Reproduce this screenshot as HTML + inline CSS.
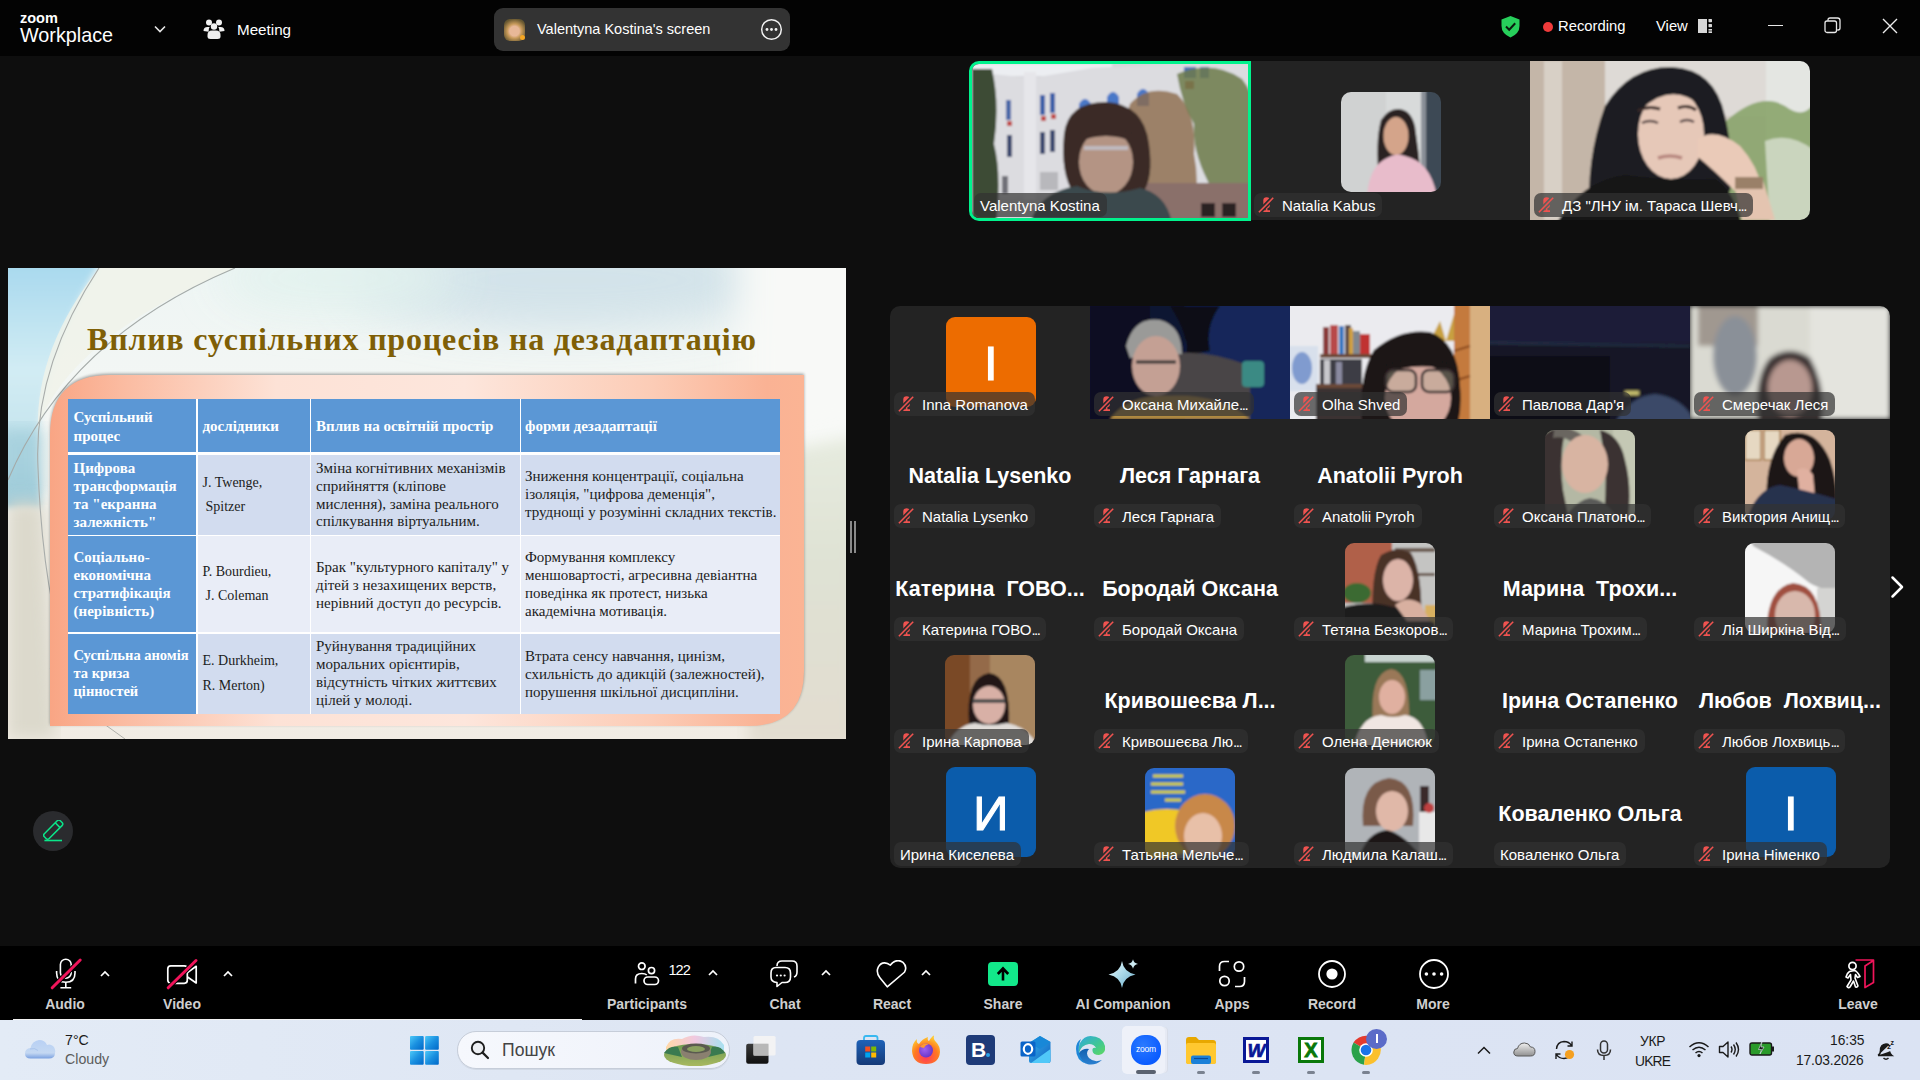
<!DOCTYPE html>
<html><head><meta charset="utf-8">
<style>
*{margin:0;padding:0;box-sizing:border-box}
html,body{width:1920px;height:1080px;overflow:hidden;background:#0e0e0e;font-family:"Liberation Sans",sans-serif;color:#fff}
.a{position:absolute}
#top{left:0;top:0;width:1920px;height:56px;background:#030303}
#main{left:0;top:56px;width:1920px;height:890px;background:#0e0e0e}
#tool{left:0;top:946px;width:1920px;height:74px;background:#000}
#task{left:0;top:1020px;width:1920px;height:60px;background:linear-gradient(90deg,#e3ebf6 0%,#dde5f3 40%,#dbe3f3 100%)}
.tile{position:absolute;background:#232323;overflow:hidden}
.lbl{position:absolute;height:24px;border-radius:7px;background:rgba(50,50,50,0.7);font-size:15px;line-height:26.5px;color:#fff;white-space:nowrap;padding:0 7px 0 28px}
.lbl.nm{padding-left:6px}
.mic{position:absolute;left:4px;top:4px;width:16px;height:16px}
.big{position:absolute;left:0;width:200px;text-align:center;font-weight:700;font-size:21.5px;color:#fff;white-space:nowrap}
.av{position:absolute;width:90px;height:90px;border-radius:9px;overflow:hidden}
.tl{position:absolute;font-size:15.2px;color:#cfcfcf;text-align:center;width:140px;font-weight:400}
.ic{position:absolute}
.sl{position:absolute;font-family:"Liberation Serif",serif;font-size:15px;line-height:18px;white-space:nowrap;color:#1c1c1c}
.sl.b{font-weight:700;color:#fff}

</style></head><body>
<div id="top" class="a"></div>
<div id="main" class="a"></div>
<div id="tool" class="a"></div>
<div class="a" style="left:13px;top:1019px;width:569px;height:1.5px;background:#f2f2f2"></div>
<div id="task" class="a"></div>
<!-- TOP BAR -->
<div class="a" style="left:20px;top:9.5px;font-size:14.5px;font-weight:700;line-height:16px;color:#fff">zoom</div>
<div class="a" style="left:20px;top:24px;font-size:19.8px;line-height:22px;color:#fff">Workplace</div>
<svg class="a" style="left:153px;top:24px" width="14" height="10" viewBox="0 0 14 10"><path d="M2 2.5 L7 7.5 L12 2.5" stroke="#e6e6e6" stroke-width="1.6" fill="none"/></svg>
<svg class="a" style="left:203px;top:18px" width="22" height="22" viewBox="0 0 22 22" fill="#f0f0f0">
<circle cx="6" cy="4.5" r="3"/><circle cx="16" cy="4.5" r="3"/><circle cx="11" cy="8.5" r="3.2"/>
<path d="M0.5 13 q0-4 4-4 h2.2 q-1 1.2-1 3.2 v1.5z"/><path d="M21.5 13 q0-4-4-4 h-2.2 q1 1.2 1 3.2 v1.5z"/>
<path d="M4.5 17 q0-4.5 4.5-4.5 h4 q4.5 0 4.5 4.5 v1.5 q0 2.5-3 2.5 h-7 q-3 0-3-2.5z"/></svg>
<div class="a" style="left:237px;top:21px;font-size:15.2px;line-height:18px;color:#fff">Meeting</div>
<div class="a" style="left:494px;top:8px;width:296px;height:43px;border-radius:9px;background:#333333"></div>
<div class="a" style="left:504px;top:19px;width:21px;height:22px;border-radius:6px;background:radial-gradient(circle at 50% 55%,#e8b898 0 30%,#c79a5a 45%,#6b5a32 75%,#4a4a30 100%)"></div>
<div class="a" style="left:520px;top:35px;width:5px;height:5px;border-radius:50%;background:#f5a623"></div>
<div class="a" style="left:537px;top:20px;font-size:14.5px;line-height:18px;color:#fff">Valentyna Kostina's screen</div>
<svg class="a" style="left:760px;top:18px" width="23" height="23" viewBox="0 0 23 23"><circle cx="11.5" cy="11.5" r="9.8" stroke="#f2f2f2" stroke-width="1.5" fill="none"/><circle cx="7" cy="11.5" r="1.4" fill="#f2f2f2"/><circle cx="11.5" cy="11.5" r="1.4" fill="#f2f2f2"/><circle cx="16" cy="11.5" r="1.4" fill="#f2f2f2"/></svg>
<svg class="a" style="left:1500px;top:15px" width="21" height="23" viewBox="0 0 21 23"><path d="M10.5 1 L19.5 4.5 V11 Q19.5 18.5 10.5 22.5 Q1.5 18.5 1.5 11 V4.5 Z" fill="#27cf5b"/><path d="M6 11.5 L9.2 14.7 L15.2 8.2" stroke="#0a1a0e" stroke-width="2" fill="none"/></svg>
<div class="a" style="left:1543px;top:22px;width:10px;height:10px;border-radius:50%;background:#ef3b3b"></div>
<div class="a" style="left:1558px;top:17px;font-size:14.8px;line-height:18px;color:#fff">Recording</div>
<div class="a" style="left:1656px;top:17px;font-size:14.8px;line-height:18px;color:#fff">View</div>
<svg class="a" style="left:1698px;top:19px" width="14" height="14" viewBox="0 0 14 14" fill="#d8d8d8"><rect x="0" y="0" width="9" height="14"/><rect x="10.5" y="0" width="3.5" height="3.2" rx="0.6"/><rect x="10.5" y="5" width="3.5" height="3.2" rx="0.6"/><rect x="10.5" y="10" width="3.5" height="1.6"/><rect x="10.5" y="12.3" width="3.5" height="1.7"/></svg>
<div class="a" style="left:1768px;top:25px;width:15px;height:1.4px;background:#e8e8e8"></div>
<svg class="a" style="left:1824px;top:17px" width="17" height="17" viewBox="0 0 17 17"><rect x="1" y="4" width="11.5" height="11.5" rx="2" stroke="#e8e8e8" stroke-width="1.3" fill="none"/><path d="M4 3.8 V3 q0-2 2-2 h7.5 q2.5 0 2.5 2.5 v7.5 q0 2-2 2 h-0.8" stroke="#e8e8e8" stroke-width="1.3" fill="none"/></svg>
<svg class="a" style="left:1882px;top:18px" width="16" height="16" viewBox="0 0 16 16"><path d="M1 1 L15 15 M15 1 L1 15" stroke="#ececec" stroke-width="1.4"/></svg>

<div class="a" style="left:8px;top:268px;width:838px;height:471px;overflow:hidden;background:#f2f2ee">
<svg class="a" style="left:0;top:0" width="838" height="471" viewBox="0 0 838 471">
<defs>
<linearGradient id="sbase" x1="0" y1="0" x2="0" y2="1"><stop offset="0" stop-color="#eef5f4"/><stop offset="0.35" stop-color="#f5f7f4"/><stop offset="0.6" stop-color="#f2f0ea"/><stop offset="1" stop-color="#f1ece4"/></linearGradient>
<radialGradient id="stop" cx="0.55" cy="0.0" r="0.45"><stop offset="0" stop-color="#c8dce4"/><stop offset="0.6" stop-color="#dae8ec" stop-opacity="0.6"/><stop offset="1" stop-color="#f4f6f4" stop-opacity="0"/></radialGradient>
<linearGradient id="scy" x1="0" y1="0" x2="1" y2="0"><stop offset="0" stop-color="#a6d8ee"/><stop offset="0.6" stop-color="#c6eaf6"/><stop offset="1" stop-color="#d8f0f6"/></linearGradient>
<linearGradient id="sal" x1="0" y1="0" x2="1" y2="0"><stop offset="0" stop-color="#f9a584"/><stop offset="0.1" stop-color="#fbbca2"/><stop offset="0.3" stop-color="#fde2d6"/><stop offset="0.55" stop-color="#fde6dc"/><stop offset="0.8" stop-color="#fcccb6"/><stop offset="0.95" stop-color="#fab294"/><stop offset="1" stop-color="#fbb494"/></linearGradient>
<linearGradient id="sgr" x1="0" y1="0" x2="0" y2="1"><stop offset="0" stop-color="#f6f6f2" stop-opacity="0"/><stop offset="0.5" stop-color="#e4e8da"/><stop offset="1" stop-color="#eee8de" stop-opacity="0"/></linearGradient>
<linearGradient id="sgr2" x1="0" y1="0" x2="0" y2="1"><stop offset="0" stop-color="#e6ebdf"/><stop offset="0.4" stop-color="#dfe2d4"/><stop offset="1" stop-color="#e2dccf"/></linearGradient>
<filter id="blur2" filterUnits="userSpaceOnUse" x="-100" y="-200" width="1100" height="500"><feGaussianBlur stdDeviation="22"/></filter>
<linearGradient id="scy2" x1="0" y1="0" x2="0" y2="1"><stop offset="0" stop-color="#a6d8ee"/><stop offset="0.45" stop-color="#d2ecf4"/><stop offset="0.8" stop-color="#c2e2ec"/><stop offset="1" stop-color="#9cc8d6"/></linearGradient>
<filter id="blur3" x="-20%" y="-20%" width="140%" height="140%"><feGaussianBlur stdDeviation="3"/></filter>
<filter id="blur4" filterUnits="userSpaceOnUse" x="500" y="-200" width="600" height="500"><feGaussianBlur stdDeviation="18"/></filter>
<filter id="blur"><feGaussianBlur stdDeviation="8"/></filter>
<filter id="sh" x="-5%" y="-5%" width="110%" height="110%"><feGaussianBlur stdDeviation="1.5"/></filter>
</defs>
<rect x="0" y="0" width="838" height="471" fill="url(#sbase)"/>
<ellipse cx="560" cy="12" rx="220" ry="50" fill="#c9dde6" opacity="0.75" filter="url(#blur2)"/><ellipse cx="330" cy="10" rx="120" ry="35" fill="#e2f2ee" opacity="0.9" filter="url(#blur2)"/>
<path d="M-10 -10 H95 Q25 100 30 200 Q31 225 33 240 H-10Z" fill="url(#scy2)" filter="url(#blur3)"/>
<rect x="-10" y="160" width="45" height="70" fill="#9ccad8" opacity="0.7" filter="url(#blur)"/>
<path d="M0 235 H36 Q40 330 48 471 H0Z" fill="#dcd9cc" filter="url(#blur)"/>
<path d="M91 0 H227 Q60 70 30 160 Q28 80 91 0Z" fill="#f0f2e8" opacity="0.8"/>
<path d="M730 -60 H900 V172 L730 192Z" fill="#f8f9f7" filter="url(#blur4)"/><path d="M740 190 L850 168 V480 H740Z" fill="url(#sgr2)" filter="url(#blur)"/>
<path d="M91 0 Q25 100 30 200 Q33 280 45 340" stroke="#a8acaa" stroke-width="1.1" fill="none"/>
<path d="M227 0 Q60 70 0 212" stroke="#a4aaa8" stroke-width="1.1" fill="none"/>
<path d="M117 471 Q70 440 42 400" stroke="#b0b0aa" stroke-width="1" fill="none"/>
<path d="M42 107 H796 V403 Q796 458 741 458 H42 V167 Q42 107 102 107 Z" fill="#000" opacity="0.35" filter="url(#sh)" transform="translate(0,-1.2)"/>
<path d="M42 107 H796 V403 Q796 458 741 458 H42 V167 Q42 107 102 107 Z" fill="url(#sal)"/>
</svg>

<div class="a" style="left:60px;top:131px;width:712px;height:315px;background:#fff"></div>
<div class="a" style="left:60px;top:131px;width:128.0px;height:53.0px;background:#5b97d5"></div>
<div class="a" style="left:189.5px;top:131px;width:112.0px;height:53.0px;background:#5b97d5"></div>
<div class="a" style="left:303px;top:131px;width:208.5px;height:53.0px;background:#5b97d5"></div>
<div class="a" style="left:513px;top:131px;width:259.0px;height:53.0px;background:#5b97d5"></div>
<div class="a" style="left:60px;top:187px;width:128.0px;height:79.5px;background:#5b97d5"></div>
<div class="a" style="left:189.5px;top:187px;width:112.0px;height:79.5px;background:#d2dcef"></div>
<div class="a" style="left:303px;top:187px;width:208.5px;height:79.5px;background:#d2dcef"></div>
<div class="a" style="left:513px;top:187px;width:259.0px;height:79.5px;background:#d2dcef"></div>
<div class="a" style="left:60px;top:268px;width:128.0px;height:96.0px;background:#5b97d5"></div>
<div class="a" style="left:189.5px;top:268px;width:112.0px;height:96.0px;background:#e9edf7"></div>
<div class="a" style="left:303px;top:268px;width:208.5px;height:96.0px;background:#e9edf7"></div>
<div class="a" style="left:513px;top:268px;width:259.0px;height:96.0px;background:#e9edf7"></div>
<div class="a" style="left:60px;top:366px;width:128.0px;height:80.0px;background:#5b97d5"></div>
<div class="a" style="left:189.5px;top:366px;width:112.0px;height:80.0px;background:#d2dcef"></div>
<div class="a" style="left:303px;top:366px;width:208.5px;height:80.0px;background:#d2dcef"></div>
<div class="a" style="left:513px;top:366px;width:259.0px;height:80.0px;background:#d2dcef"></div>
<div class="a" style="left:79px;top:53px;font-family:'Liberation Serif',serif;font-weight:700;font-size:32px;line-height:36px;letter-spacing:0.8px;color:#7f5f06;white-space:nowrap">Вплив суспільних процесів на дезадаптацію</div>
<div class="sl b" style="left:65.5px;top:140.0px;">Суспільний</div>
<div class="sl b" style="left:65.5px;top:158.5px;">процес</div>
<div class="sl b" style="left:194.5px;top:149.0px;">дослідники</div>
<div class="sl b" style="left:308.0px;top:149.0px;">Вплив на освітній простір</div>
<div class="sl b" style="left:517.0px;top:149.0px;">форми дезадаптації</div>
<div class="sl b" style="left:65.5px;top:190.7px;">Цифрова</div>
<div class="sl b" style="left:65.5px;top:208.7px;">трансформація</div>
<div class="sl b" style="left:65.5px;top:226.7px;">та "екранна</div>
<div class="sl b" style="left:65.5px;top:244.7px;">залежність"</div>
<div class="sl" style="left:194.5px;top:205.7px;font-size:14px">J. Twenge,</div>
<div class="sl" style="left:197.5px;top:230.3px;font-size:14px">Spitzer</div>
<div class="sl" style="left:308.0px;top:190.7px;">Зміна когнітивних механізмів</div>
<div class="sl" style="left:308.0px;top:208.6px;">сприйняття (кліпове</div>
<div class="sl" style="left:308.0px;top:226.5px;">мислення), заміна реального</div>
<div class="sl" style="left:308.0px;top:244.4px;">спілкування віртуальним.</div>
<div class="sl" style="left:517.0px;top:199.0px;">Зниження концентрації, соціальна</div>
<div class="sl" style="left:517.0px;top:217.0px;">ізоляція, "цифрова деменція",</div>
<div class="sl" style="left:517.0px;top:235.0px;">труднощі у розумінні складних текстів.</div>
<div class="sl b" style="left:65.5px;top:279.7px;">Соціально-</div>
<div class="sl b" style="left:65.5px;top:297.7px;">економічна</div>
<div class="sl b" style="left:65.5px;top:315.7px;">стратифікація</div>
<div class="sl b" style="left:65.5px;top:333.7px;">(нерівність)</div>
<div class="sl" style="left:194.5px;top:294.7px;font-size:14px">P. Bourdieu,</div>
<div class="sl" style="left:197.5px;top:319.0px;font-size:14px">J. Coleman</div>
<div class="sl" style="left:308.0px;top:289.5px;">Брак "культурного капіталу" у</div>
<div class="sl" style="left:308.0px;top:307.5px;">дітей з незахищених верств,</div>
<div class="sl" style="left:308.0px;top:325.5px;">нерівний доступ до ресурсів.</div>
<div class="sl" style="left:517.0px;top:279.6px;">Формування комплексу</div>
<div class="sl" style="left:517.0px;top:297.6px;">меншовартості, агресивна девіантна</div>
<div class="sl" style="left:517.0px;top:315.6px;">поведінка як протест, низька</div>
<div class="sl" style="left:517.0px;top:333.6px;">академічна мотивація.</div>
<div class="sl b" style="left:65.5px;top:378.0px;font-size:14.5px">Суспільна аномія</div>
<div class="sl b" style="left:65.5px;top:395.9px;font-size:14.5px">та криза</div>
<div class="sl b" style="left:65.5px;top:413.8px;font-size:14.5px">цінностей</div>
<div class="sl" style="left:194.5px;top:384.0px;font-size:14px">E. Durkheim,</div>
<div class="sl" style="left:194.5px;top:408.6px;font-size:14px">R. Merton)</div>
<div class="sl" style="left:308.0px;top:369.0px;">Руйнування традиційних</div>
<div class="sl" style="left:308.0px;top:387.0px;">моральних орієнтирів,</div>
<div class="sl" style="left:308.0px;top:405.0px;">відсутність чітких життєвих</div>
<div class="sl" style="left:308.0px;top:423.0px;">цілей у молоді.</div>
<div class="sl" style="left:517.0px;top:379.4px;">Втрата сенсу навчання, цинізм,</div>
<div class="sl" style="left:517.0px;top:397.3px;">схильність до адикцій (залежностей),</div>
<div class="sl" style="left:517.0px;top:415.2px;">порушення шкільної дисципліни.</div>
</div>
<div class="a" style="left:850px;top:521px;width:2px;height:32px;background:#8a8a8a"></div><div class="a" style="left:854px;top:521px;width:2px;height:32px;background:#8a8a8a"></div>
<div class="a" style="left:33px;top:811px;width:40px;height:40px;border-radius:50%;background:#2a2b2e"></div>
<svg class="a" style="left:43px;top:820px" width="22" height="24" viewBox="0 0 22 24"><g transform="translate(10.2 9.65) rotate(-45)"><rect x="-11.3" y="-3.4" width="22.6" height="6.8" rx="2.2" stroke="#0be68a" stroke-width="1.5" fill="none"/><path d="M6.3 -3.4 V3.4" stroke="#0be68a" stroke-width="1.5"/></g><path d="M1.4 20.5 H19" stroke="#0be68a" stroke-width="1.6"/></svg><svg width="0" height="0" style="position:absolute"><defs><clipPath id="micclip" clipPathUnits="userSpaceOnUse"><path d="M-1 -1 H13.45 L-1 13.65Z M17 17 V2.55 L2.74 17Z"/></clipPath></defs></svg>
<div class="a" style="left:1250px;top:61px;width:280px;height:159px;background:#232323"></div>
<div class="a" style="left:969px;top:61px;width:282px;height:160px;overflow:hidden;border-radius:10px 0 0 10px;border:3px solid #00f28c"><svg width="282" height="160" viewBox="0 0 282 160"><defs><filter id="f2" x="-10%" y="-10%" width="120%" height="120%"><feGaussianBlur stdDeviation="0.9"/></filter></defs><g filter="url(#f2)">
<rect x="-5" y="-5" width="292" height="170" fill="#d6d6da"/>
<rect x="0" y="0" width="140" height="12" fill="#eceef2"/>
<path d="M20 10 L60 14 L120 4 L200 0 L282 0 V130 L20 135Z" fill="#dcdce0"/>
<rect x="52" y="8" width="12" height="128" fill="#e6e6ea"/>
<rect x="17" y="42" width="4" height="18" fill="#4a68a8"/><rect x="34" y="36" width="5" height="20" fill="#4a68a8"/>
<rect x="68" y="31" width="5" height="20" fill="#3c5ea8"/><rect x="78" y="29" width="5" height="20" fill="#3c5ea8"/>
<rect x="69" y="52" width="5" height="5" fill="#c04848"/><rect x="79" y="50" width="5" height="5" fill="#c04848"/><rect x="35" y="57" width="5" height="5" fill="#c04848"/>
<rect x="68" y="68" width="5" height="22" fill="#3c4a70"/><rect x="78" y="66" width="5" height="22" fill="#3c4a70"/><rect x="35" y="71" width="5" height="22" fill="#3c4a70"/>
<path d="M107 52 V40 Q113 30 119 40 V52Z" fill="#4a78c8"/><path d="M135 45 V33 Q141 23 147 33 V45Z" fill="#4a78c8"/><path d="M165 42 V30 Q171 20 177 30 V42Z" fill="#4a78c8"/>
<rect x="68" y="108" width="18" height="18" fill="#b8b8bc"/><rect x="30" y="112" width="6" height="18" fill="#707078"/>
<rect x="212" y="3" width="12" height="11" fill="#4a6fb8"/><rect x="228" y="3" width="9" height="11" fill="#4a6fb8"/><rect x="213" y="17" width="9" height="8" fill="#c04848"/>
<path d="M0 5 H20 Q28 40 22 80 Q30 110 24 160 H0Z" fill="#3c4c34"/>
<path d="M158 40 Q175 20 205 30 Q225 50 222 90 Q230 130 215 160 H170 Q150 120 165 90 Q150 60 158 40Z" fill="#8c6a4a" opacity="0.8"/>
<path d="M205 10 Q240 -5 270 15 Q290 40 282 80 V150 Q260 150 240 125 Q220 90 222 60 Q210 40 205 10Z" fill="#6c7a4a" opacity="0.85"/>
<rect x="171" y="119" width="111" height="41" fill="#8a706a"/>
<rect x="229" y="139" width="14" height="14" fill="#2a2424"/><rect x="250" y="139" width="14" height="14" fill="#2a2424"/>
<path d="M92 70 Q96 38 134 38 Q172 40 177 80 Q182 115 170 130 L102 130 Q88 110 92 70Z" fill="#3a2a26"/>
<ellipse cx="134" cy="98" rx="27" ry="33" fill="#b49484"/>
<path d="M106 70 Q134 58 162 70 L162 78 Q134 66 106 78Z" fill="#3a2a26"/>
<path d="M112 84 h44" stroke="#c8d8f0" stroke-width="4" opacity="0.55"/>
<path d="M58 160 Q66 128 105 122 Q134 134 168 124 Q195 130 200 160Z" fill="#3a4a4e"/>
</g></svg></div>
<div class="lbl nm" style="left:974px;top:193px">Valentyna Kostina</div>
<div class="a" style="left:1341px;top:92px;width:100px;height:100px;overflow:hidden;border-radius:10px;"><svg width="100" height="100" viewBox="0 0 100 100"><defs><filter id="f4" x="-10%" y="-10%" width="120%" height="120%"><feGaussianBlur stdDeviation="0.8"/></filter></defs><g filter="url(#f4)">
<rect x="-5" y="-5" width="110" height="110" fill="#d8dada"/>
<rect x="-5" y="-5" width="50" height="110" fill="#d0d2d2"/>
<rect x="84" y="-5" width="20" height="110" fill="#3e4854"/>
<rect x="80" y="-5" width="5" height="110" fill="#8a9098"/>
<path d="M38 88 Q34 50 40 28 Q48 16 58 17 Q70 18 74 34 Q78 60 80 86Z" fill="#2a2020"/>
<ellipse cx="55" cy="44" rx="12.5" ry="19" fill="#d4a48a"/>
<path d="M26 105 Q28 74 46 66 Q55 60 64 64 Q90 70 96 105Z" fill="#e8bccb"/>
</g></svg></div>
<div class="lbl" style="left:1254px;top:193px"><svg class="mic" viewBox="0 0 16 16"><g clip-path="url(#micclip)"><rect x="5.3" y="0.3" width="6.6" height="11" rx="3.3" fill="#ef5350"/><path d="M8.6 11 v2.6 M5.2 14.2 h6.8" stroke="#ef5350" stroke-width="1.7"/></g><path d="M0.9 15.3 L15.2 0.8" stroke="#ef5350" stroke-width="1.6"/></svg>Natalia Kabus</div>
<div class="a" style="left:1530px;top:61px;width:280px;height:159px;overflow:hidden;border-radius:0 10px 10px 0;"><svg width="280" height="159" viewBox="0 0 280 159"><defs><filter id="f6" x="-10%" y="-10%" width="120%" height="120%"><feGaussianBlur stdDeviation="1.3"/></filter></defs><g filter="url(#f6)">
<rect x="-5" y="-5" width="290" height="170" fill="#d4ccc4"/>
<rect x="-5" y="-5" width="80" height="170" fill="#c4b6a8"/>
<rect x="14" y="0" width="18" height="159" fill="#d8d0c6"/>
<rect x="75" y="-5" width="210" height="60" fill="#dedad6"/>
<rect x="236" y="-5" width="50" height="170" fill="#e4e6e2"/>
<path d="M196 60 Q230 30 255 45 Q275 60 285 40 V165 H205 Q190 110 196 60Z" fill="#8aa46c" opacity="0.9"/>
<path d="M235 80 Q260 70 285 90 V165 H240Z" fill="#d8e0d0" opacity="0.8"/>
<path d="M60 159 Q55 100 75 45 Q100 5 142 6 Q185 8 195 55 Q205 100 200 130 L150 159Z" fill="#1e1e22"/>
<ellipse cx="141" cy="73" rx="33" ry="45" fill="#e6c8b8"/><path d="M108 50 Q118 44 130 48 M148 47 Q158 43 166 49" stroke="#3a2a28" stroke-width="3" fill="none"/><path d="M112 62 Q120 58 128 62 M150 61 Q157 57 164 61" stroke="#5a4a48" stroke-width="2.5" fill="none"/><path d="M128 97 Q140 93 152 97" stroke="#b88880" stroke-width="3.5" fill="none"/>
<path d="M112 48 Q141 20 172 45 L172 30 Q141 10 110 30Z" fill="#1e1e22"/>
<path d="M168 78 Q185 66 210 85 Q228 105 232 128 L205 130 Q185 110 168 96Z" fill="#eacab8"/>
<path d="M205 128 L232 116 L245 159 H212Z" fill="#e4c4b0"/>
<rect x="205" y="116" width="28" height="12" fill="#9a8068"/>
<path d="M25 165 Q50 120 95 114 Q140 120 185 118 Q205 130 212 165Z" fill="#141416"/>
</g></svg></div>
<div class="lbl" style="left:1534px;top:193px"><svg class="mic" viewBox="0 0 16 16"><g clip-path="url(#micclip)"><rect x="5.3" y="0.3" width="6.6" height="11" rx="3.3" fill="#ef5350"/><path d="M8.6 11 v2.6 M5.2 14.2 h6.8" stroke="#ef5350" stroke-width="1.7"/></g><path d="M0.9 15.3 L15.2 0.8" stroke="#ef5350" stroke-width="1.6"/></svg>ДЗ "ЛНУ ім. Тараса Шевч<span style="letter-spacing:-1.5px">...</span></div>
<div class="a" style="left:890px;top:306px;width:1000px;height:562px;background:#232323;border-radius:10px"></div>
<div class="a" style="left:1090px;top:306px;width:200px;height:113px;overflow:hidden;border-radius:0;"><svg width="200" height="113" viewBox="0 0 200 113"><defs><filter id="f9" x="-10%" y="-10%" width="120%" height="120%"><feGaussianBlur stdDeviation="1.2"/></filter></defs><g filter="url(#f9)">
<rect x="-5" y="-5" width="210" height="123" fill="#0e1630"/><rect x="95" y="-5" width="110" height="123" fill="#12285a"/><path d="M80 0 Q100 30 95 50 L120 45 Q115 20 130 0Z" fill="#0a0e18"/>
<rect x="0" y="0" width="60" height="113" fill="#0c1020"/>
<path d="M70 50 Q110 40 160 60 V113 H70Z" fill="#4a4446"/>
<rect x="152" y="55" width="22" height="26" rx="4" fill="#3a8a84"/>
<path d="M36 40 Q44 10 70 14 Q92 20 92 48 L40 52Z" fill="#9a9a98"/>
<ellipse cx="66" cy="60" rx="24" ry="30" fill="#c4a094"/>
<path d="M46 56 h40" stroke="#303030" stroke-width="3"/>
<path d="M20 113 Q40 88 80 90 Q130 88 160 113Z" fill="#b08a40"/>
</g></svg></div>
<div class="lbl" style="left:1094px;top:392px"><svg class="mic" viewBox="0 0 16 16"><g clip-path="url(#micclip)"><rect x="5.3" y="0.3" width="6.6" height="11" rx="3.3" fill="#ef5350"/><path d="M8.6 11 v2.6 M5.2 14.2 h6.8" stroke="#ef5350" stroke-width="1.7"/></g><path d="M0.9 15.3 L15.2 0.8" stroke="#ef5350" stroke-width="1.6"/></svg>Оксана Михайле<span style="letter-spacing:-1.5px">...</span></div>
<div class="a" style="left:1290px;top:306px;width:200px;height:113px;overflow:hidden;border-radius:0;"><svg width="200" height="113" viewBox="0 0 200 113"><defs><filter id="f11" x="-10%" y="-10%" width="120%" height="120%"><feGaussianBlur stdDeviation="1.0"/></filter></defs><g filter="url(#f11)">
<rect x="-5" y="-5" width="210" height="123" fill="#ebebef"/>
<rect x="-5" y="40" width="33" height="45" fill="#d8e0ec"/><ellipse cx="12" cy="62" rx="10" ry="16" fill="#6a8ac8" opacity="0.8"/>
<rect x="26" y="82" width="60" height="35" fill="#3a3032"/>
<rect x="30" y="48" width="54" height="4" fill="#6a4a38"/><rect x="26" y="78" width="50" height="4" fill="#6a4a38"/>
<rect x="33" y="21" width="6" height="27" fill="#8a3a3a"/><rect x="40" y="19" width="8" height="29" fill="#b84848"/><rect x="49" y="20" width="5" height="28" fill="#3a78c0"/><rect x="55" y="19" width="6" height="29" fill="#5a4a48"/><rect x="59" y="22" width="4" height="26" fill="#d0a040"/><rect x="63" y="25" width="7" height="23" fill="#808890"/><rect x="70" y="28" width="10" height="20" fill="#c03030"/>
<rect x="30" y="53" width="42" height="25" fill="#3e3c44"/><rect x="34" y="54" width="6" height="24" fill="#c8c8cc"/><rect x="46" y="56" width="6" height="22" fill="#8a8aa0"/>
<path d="M140 35 L150 15 L156 35 L165 5 L172 35Z" fill="#c8a040"/>
<rect x="164" y="-5" width="41" height="123" fill="#c47a3c"/><rect x="180" y="-5" width="25" height="123" fill="#d8b080"/><path d="M164 45 L180 40 M164 75 L180 70" stroke="#8a4a20" stroke-width="2"/>
<path d="M72 117 Q68 70 84 44 Q110 22 140 26 Q168 36 170 80 Q172 100 168 117Z" fill="#1a1416"/>
<ellipse cx="128" cy="92" rx="33" ry="35" fill="#d4a89e"/>
<path d="M94 60 Q128 46 166 60 L166 66 Q128 54 94 68Z" fill="#1a1416"/>
<rect x="96" y="64" width="30" height="22" rx="7" stroke="#3a3030" stroke-width="2.5" fill="#b8b098" fill-opacity="0.4"/><rect x="132" y="64" width="32" height="22" rx="7" stroke="#3a3030" stroke-width="2.5" fill="#b8b098" fill-opacity="0.4"/>
</g></svg></div>
<div class="lbl" style="left:1294px;top:392px"><svg class="mic" viewBox="0 0 16 16"><g clip-path="url(#micclip)"><rect x="5.3" y="0.3" width="6.6" height="11" rx="3.3" fill="#ef5350"/><path d="M8.6 11 v2.6 M5.2 14.2 h6.8" stroke="#ef5350" stroke-width="1.7"/></g><path d="M0.9 15.3 L15.2 0.8" stroke="#ef5350" stroke-width="1.6"/></svg>Olha Shved</div>
<div class="a" style="left:1490px;top:306px;width:200px;height:113px;overflow:hidden;border-radius:0;"><svg width="200" height="113" viewBox="0 0 200 113"><defs><filter id="f13" x="-10%" y="-10%" width="120%" height="120%"><feGaussianBlur stdDeviation="1.5"/></filter></defs><g filter="url(#f13)">
<rect x="-5" y="-5" width="210" height="123" fill="#121628"/>
<rect x="-5" y="-5" width="210" height="42" fill="#1a1f38"/>
<path d="M-5 37 L200 40" stroke="#2a3a50" stroke-width="1.5"/>
<rect x="-5" y="50" width="125" height="70" fill="#0a0c16"/>
<rect x="135" y="85" width="14" height="4" fill="#c8c070"/>
<path d="M125 117 Q140 90 165 88 Q195 92 205 117Z" fill="#3a4868"/>
</g></svg></div>
<div class="lbl" style="left:1494px;top:392px"><svg class="mic" viewBox="0 0 16 16"><g clip-path="url(#micclip)"><rect x="5.3" y="0.3" width="6.6" height="11" rx="3.3" fill="#ef5350"/><path d="M8.6 11 v2.6 M5.2 14.2 h6.8" stroke="#ef5350" stroke-width="1.7"/></g><path d="M0.9 15.3 L15.2 0.8" stroke="#ef5350" stroke-width="1.6"/></svg>Павлова Дар'я</div>
<div class="a" style="left:1690px;top:306px;width:200px;height:113px;overflow:hidden;border-radius:0 10px 0 0;"><svg width="200" height="113" viewBox="0 0 200 113"><defs><filter id="f15" x="-10%" y="-10%" width="120%" height="120%"><feGaussianBlur stdDeviation="2.5"/></filter></defs><g filter="url(#f15)">
<rect width="200" height="113" fill="#dadad2"/>
<rect x="120" y="0" width="80" height="113" fill="#e4e4de"/>
<rect x="8" y="0" width="60" height="40" fill="#a09890"/>
<ellipse cx="45" cy="50" rx="22" ry="40" fill="#8a9098"/>
<path d="M68 113 Q64 70 80 52 Q100 38 120 52 Q136 80 132 113Z" fill="#3a3030"/>
<ellipse cx="100" cy="82" rx="22" ry="28" fill="#b89890"/>
</g></svg></div>
<div class="lbl" style="left:1694px;top:392px"><svg class="mic" viewBox="0 0 16 16"><g clip-path="url(#micclip)"><rect x="5.3" y="0.3" width="6.6" height="11" rx="3.3" fill="#ef5350"/><path d="M8.6 11 v2.6 M5.2 14.2 h6.8" stroke="#ef5350" stroke-width="1.7"/></g><path d="M0.9 15.3 L15.2 0.8" stroke="#ef5350" stroke-width="1.6"/></svg>Смеречак Леся</div>
<div class="av" style="left:945.5px;top:317.0px;width:90.5px;background:#ed6c00"></div><div class="a" style="left:945.5px;top:318.0px;width:90.5px;height:90px;line-height:90px;text-align:center;font-size:49px;font-weight:400;-webkit-text-stroke:1.1px #fff;color:#fff">I</div>
<div class="lbl" style="left:894px;top:392px"><svg class="mic" viewBox="0 0 16 16"><g clip-path="url(#micclip)"><rect x="5.3" y="0.3" width="6.6" height="11" rx="3.3" fill="#ef5350"/><path d="M8.6 11 v2.6 M5.2 14.2 h6.8" stroke="#ef5350" stroke-width="1.7"/></g><path d="M0.9 15.3 L15.2 0.8" stroke="#ef5350" stroke-width="1.6"/></svg>Inna Romanova</div>
<div class="big" style="left:890px;top:463.4px;line-height:26px;height:26px">Natalia Lysenko</div>
<div class="lbl" style="left:894px;top:504px"><svg class="mic" viewBox="0 0 16 16"><g clip-path="url(#micclip)"><rect x="5.3" y="0.3" width="6.6" height="11" rx="3.3" fill="#ef5350"/><path d="M8.6 11 v2.6 M5.2 14.2 h6.8" stroke="#ef5350" stroke-width="1.7"/></g><path d="M0.9 15.3 L15.2 0.8" stroke="#ef5350" stroke-width="1.6"/></svg>Natalia Lysenko</div>
<div class="big" style="left:1090px;top:463.4px;line-height:26px;height:26px">Леся Гарнага</div>
<div class="lbl" style="left:1094px;top:504px"><svg class="mic" viewBox="0 0 16 16"><g clip-path="url(#micclip)"><rect x="5.3" y="0.3" width="6.6" height="11" rx="3.3" fill="#ef5350"/><path d="M8.6 11 v2.6 M5.2 14.2 h6.8" stroke="#ef5350" stroke-width="1.7"/></g><path d="M0.9 15.3 L15.2 0.8" stroke="#ef5350" stroke-width="1.6"/></svg>Леся Гарнага</div>
<div class="big" style="left:1290px;top:463.4px;line-height:26px;height:26px">Anatolii Pyroh</div>
<div class="lbl" style="left:1294px;top:504px"><svg class="mic" viewBox="0 0 16 16"><g clip-path="url(#micclip)"><rect x="5.3" y="0.3" width="6.6" height="11" rx="3.3" fill="#ef5350"/><path d="M8.6 11 v2.6 M5.2 14.2 h6.8" stroke="#ef5350" stroke-width="1.7"/></g><path d="M0.9 15.3 L15.2 0.8" stroke="#ef5350" stroke-width="1.6"/></svg>Anatolii Pyroh</div>
<div class="a" style="left:1545px;top:430px;width:90px;height:90px;overflow:hidden;border-radius:9px;"><svg width="90" height="90" viewBox="0 0 90 90"><defs><filter id="f25" x="-10%" y="-10%" width="120%" height="120%"><feGaussianBlur stdDeviation="0.8"/></filter></defs><g filter="url(#f25)"><rect x="-5" y="-5" width="100" height="100" fill="#b4b8a4"/><rect x="68" y="-5" width="30" height="100" fill="#c4c8b4"/>
<path d="M-5 95 V10 Q5 -5 20 0 Q14 30 18 60 L25 95Z" fill="#3a3230"/><path d="M55 0 Q75 5 80 30 Q88 60 82 95 L58 95 Q62 60 60 30Z" fill="#3a3230"/><path d="M10 -5 Q30 -2 40 8 L30 15 Q20 5 8 8Z" fill="#6a6660"/>
<ellipse cx="40" cy="34" rx="23" ry="29" fill="#d8b4a2"/><path d="M15 95 Q30 70 45 68 Q65 70 75 95Z" fill="#5a5a58"/></g></svg></div>
<div class="lbl" style="left:1494px;top:504px"><svg class="mic" viewBox="0 0 16 16"><g clip-path="url(#micclip)"><rect x="5.3" y="0.3" width="6.6" height="11" rx="3.3" fill="#ef5350"/><path d="M8.6 11 v2.6 M5.2 14.2 h6.8" stroke="#ef5350" stroke-width="1.7"/></g><path d="M0.9 15.3 L15.2 0.8" stroke="#ef5350" stroke-width="1.6"/></svg>Оксана Платоно<span style="letter-spacing:-1.5px">...</span></div>
<div class="a" style="left:1745px;top:430px;width:90px;height:90px;overflow:hidden;border-radius:9px;"><svg width="90" height="90" viewBox="0 0 90 90"><defs><filter id="f27" x="-10%" y="-10%" width="120%" height="120%"><feGaussianBlur stdDeviation="0.8"/></filter></defs><g filter="url(#f27)"><rect x="-5" y="-5" width="100" height="100" fill="#d4b49c"/><rect x="0" y="0" width="16" height="30" fill="#e6d8c2" stroke="#a88050" stroke-width="1.5"/><rect x="19" y="0" width="16" height="30" fill="#e6d8c2" stroke="#a88050" stroke-width="1.5"/>
<path d="M22 80 Q18 30 40 5 Q70 -5 85 30 Q95 60 90 85Z" fill="#1e1818"/><ellipse cx="54" cy="28" rx="15" ry="19" fill="#d8a896"/>
<path d="M52 40 Q62 35 68 45 L70 68 L55 68Z" fill="#e0b0a0"/><path d="M0 95 Q10 58 35 55 Q60 60 95 70 V95Z" fill="#28304e"/></g></svg></div>
<div class="lbl" style="left:1694px;top:504px"><svg class="mic" viewBox="0 0 16 16"><g clip-path="url(#micclip)"><rect x="5.3" y="0.3" width="6.6" height="11" rx="3.3" fill="#ef5350"/><path d="M8.6 11 v2.6 M5.2 14.2 h6.8" stroke="#ef5350" stroke-width="1.7"/></g><path d="M0.9 15.3 L15.2 0.8" stroke="#ef5350" stroke-width="1.6"/></svg>Виктория Анищ<span style="letter-spacing:-1.5px">...</span></div>
<div class="big" style="left:890px;top:575.8px;line-height:26px;height:26px">Катерина&nbsp; ГОВО...</div>
<div class="lbl" style="left:894px;top:617px"><svg class="mic" viewBox="0 0 16 16"><g clip-path="url(#micclip)"><rect x="5.3" y="0.3" width="6.6" height="11" rx="3.3" fill="#ef5350"/><path d="M8.6 11 v2.6 M5.2 14.2 h6.8" stroke="#ef5350" stroke-width="1.7"/></g><path d="M0.9 15.3 L15.2 0.8" stroke="#ef5350" stroke-width="1.6"/></svg>Катерина ГОВО<span style="letter-spacing:-1.5px">...</span></div>
<div class="big" style="left:1090px;top:575.8px;line-height:26px;height:26px">Бородай Оксана</div>
<div class="lbl" style="left:1094px;top:617px"><svg class="mic" viewBox="0 0 16 16"><g clip-path="url(#micclip)"><rect x="5.3" y="0.3" width="6.6" height="11" rx="3.3" fill="#ef5350"/><path d="M8.6 11 v2.6 M5.2 14.2 h6.8" stroke="#ef5350" stroke-width="1.7"/></g><path d="M0.9 15.3 L15.2 0.8" stroke="#ef5350" stroke-width="1.6"/></svg>Бородай Оксана</div>
<div class="a" style="left:1345px;top:543px;width:90px;height:90px;overflow:hidden;border-radius:9px;"><svg width="90" height="90" viewBox="0 0 90 90"><defs><filter id="f33" x="-10%" y="-10%" width="120%" height="120%"><feGaussianBlur stdDeviation="0.8"/></filter></defs><g filter="url(#f33)"><rect x="-5" y="-5" width="100" height="100" fill="#c4c4c2"/><rect x="-5" y="-5" width="52" height="65" fill="#b06048"/>
<rect x="50" y="5" width="40" height="4" fill="#6a5a50"/><rect x="50" y="30" width="40" height="3" fill="#6a5a50"/><rect x="80" y="62" width="15" height="20" fill="#d8b060"/>
<ellipse cx="12" cy="50" rx="14" ry="10" fill="#3a6a30"/>
<path d="M28 85 Q25 30 36 12 Q52 2 66 10 Q78 30 76 80Z" fill="#4a3028"/><ellipse cx="53" cy="37" rx="15" ry="21" fill="#dcb4a8"/>
<path d="M-5 95 V65 Q20 58 40 62 Q60 66 90 80 V95Z" fill="#1c1a1a"/><path d="M50 62 Q62 52 75 60 L85 78 L62 78Z" fill="#d8b0a0"/></g></svg></div>
<div class="lbl" style="left:1294px;top:617px"><svg class="mic" viewBox="0 0 16 16"><g clip-path="url(#micclip)"><rect x="5.3" y="0.3" width="6.6" height="11" rx="3.3" fill="#ef5350"/><path d="M8.6 11 v2.6 M5.2 14.2 h6.8" stroke="#ef5350" stroke-width="1.7"/></g><path d="M0.9 15.3 L15.2 0.8" stroke="#ef5350" stroke-width="1.6"/></svg>Тетяна Безкоров<span style="letter-spacing:-1.5px">...</span></div>
<div class="big" style="left:1490px;top:575.8px;line-height:26px;height:26px">Марина&nbsp; Трохи...</div>
<div class="lbl" style="left:1494px;top:617px"><svg class="mic" viewBox="0 0 16 16"><g clip-path="url(#micclip)"><rect x="5.3" y="0.3" width="6.6" height="11" rx="3.3" fill="#ef5350"/><path d="M8.6 11 v2.6 M5.2 14.2 h6.8" stroke="#ef5350" stroke-width="1.7"/></g><path d="M0.9 15.3 L15.2 0.8" stroke="#ef5350" stroke-width="1.6"/></svg>Марина Трохим<span style="letter-spacing:-1.5px">...</span></div>
<div class="a" style="left:1745px;top:543px;width:90px;height:90px;overflow:hidden;border-radius:9px;"><svg width="90" height="90" viewBox="0 0 90 90"><defs><filter id="f37" x="-10%" y="-10%" width="120%" height="120%"><feGaussianBlur stdDeviation="0.8"/></filter></defs><g filter="url(#f37)"><rect x="-5" y="-5" width="100" height="100" fill="#f6f6f6"/><path d="M5 -5 H95 V50 Q70 45 62 38 Q40 20 8 3Z" fill="#b4b4b4"/><rect x="72" y="45" width="23" height="50" fill="#d4d4d2"/>
<path d="M22 95 Q20 45 48 40 Q78 42 76 95Z" fill="#a05040"/><ellipse cx="50" cy="72" rx="20" ry="24" fill="#d8b8ac"/></g></svg></div>
<div class="lbl" style="left:1694px;top:617px"><svg class="mic" viewBox="0 0 16 16"><g clip-path="url(#micclip)"><rect x="5.3" y="0.3" width="6.6" height="11" rx="3.3" fill="#ef5350"/><path d="M8.6 11 v2.6 M5.2 14.2 h6.8" stroke="#ef5350" stroke-width="1.7"/></g><path d="M0.9 15.3 L15.2 0.8" stroke="#ef5350" stroke-width="1.6"/></svg>Лія Ширкіна Від<span style="letter-spacing:-1.5px">...</span></div>
<div class="a" style="left:945px;top:655px;width:90px;height:90px;overflow:hidden;border-radius:9px;"><svg width="90" height="90" viewBox="0 0 90 90"><defs><filter id="f39" x="-10%" y="-10%" width="120%" height="120%"><feGaussianBlur stdDeviation="0.8"/></filter></defs><g filter="url(#f39)"><rect x="-5" y="-5" width="100" height="100" fill="#a88660"/><rect x="-5" y="-5" width="35" height="100" fill="#7a4a28"/><rect x="25" y="-5" width="20" height="100" fill="#946a48"/>
<path d="M24 70 Q20 22 44 18 Q66 20 64 70Z" fill="#201818"/><ellipse cx="44" cy="50" rx="16" ry="19" fill="#d8b0a6"/><path d="M28 46 h32" stroke="#505050" stroke-width="4"/>
<path d="M0 95 Q10 70 30 68 Q45 72 62 68 Q85 72 95 95Z" fill="#e0dcd8"/></g></svg></div>
<div class="lbl" style="left:894px;top:729px"><svg class="mic" viewBox="0 0 16 16"><g clip-path="url(#micclip)"><rect x="5.3" y="0.3" width="6.6" height="11" rx="3.3" fill="#ef5350"/><path d="M8.6 11 v2.6 M5.2 14.2 h6.8" stroke="#ef5350" stroke-width="1.7"/></g><path d="M0.9 15.3 L15.2 0.8" stroke="#ef5350" stroke-width="1.6"/></svg>Ірина Карпова</div>
<div class="big" style="left:1090px;top:688.2px;line-height:26px;height:26px">Кривошеєва Л...</div>
<div class="lbl" style="left:1094px;top:729px"><svg class="mic" viewBox="0 0 16 16"><g clip-path="url(#micclip)"><rect x="5.3" y="0.3" width="6.6" height="11" rx="3.3" fill="#ef5350"/><path d="M8.6 11 v2.6 M5.2 14.2 h6.8" stroke="#ef5350" stroke-width="1.7"/></g><path d="M0.9 15.3 L15.2 0.8" stroke="#ef5350" stroke-width="1.6"/></svg>Кривошеєва Лю<span style="letter-spacing:-1.5px">...</span></div>
<div class="a" style="left:1345px;top:655px;width:90px;height:90px;overflow:hidden;border-radius:9px;"><svg width="90" height="90" viewBox="0 0 90 90"><defs><filter id="f43" x="-10%" y="-10%" width="120%" height="120%"><feGaussianBlur stdDeviation="0.8"/></filter></defs><g filter="url(#f43)"><rect x="-5" y="-5" width="100" height="100" fill="#3e5c3a"/><rect x="20" y="-5" width="70" height="12" fill="#c8d4d0"/><rect x="75" y="15" width="20" height="30" fill="#8aa0a0"/>
<path d="M28 70 Q24 18 46 14 Q66 16 64 70Z" fill="#9a7858"/><ellipse cx="47" cy="42" rx="13" ry="17" fill="#e0b0a0"/>
<path d="M8 95 Q14 62 36 60 Q48 64 60 60 Q80 62 84 95Z" fill="#f0e6e2"/></g></svg></div>
<div class="lbl" style="left:1294px;top:729px"><svg class="mic" viewBox="0 0 16 16"><g clip-path="url(#micclip)"><rect x="5.3" y="0.3" width="6.6" height="11" rx="3.3" fill="#ef5350"/><path d="M8.6 11 v2.6 M5.2 14.2 h6.8" stroke="#ef5350" stroke-width="1.7"/></g><path d="M0.9 15.3 L15.2 0.8" stroke="#ef5350" stroke-width="1.6"/></svg>Олена Денисюк</div>
<div class="big" style="left:1490px;top:688.2px;line-height:26px;height:26px">Ірина Остапенко</div>
<div class="lbl" style="left:1494px;top:729px"><svg class="mic" viewBox="0 0 16 16"><g clip-path="url(#micclip)"><rect x="5.3" y="0.3" width="6.6" height="11" rx="3.3" fill="#ef5350"/><path d="M8.6 11 v2.6 M5.2 14.2 h6.8" stroke="#ef5350" stroke-width="1.7"/></g><path d="M0.9 15.3 L15.2 0.8" stroke="#ef5350" stroke-width="1.6"/></svg>Ірина Остапенко</div>
<div class="big" style="left:1690px;top:688.2px;line-height:26px;height:26px">Любов&nbsp; Лохвиц...</div>
<div class="lbl" style="left:1694px;top:729px"><svg class="mic" viewBox="0 0 16 16"><g clip-path="url(#micclip)"><rect x="5.3" y="0.3" width="6.6" height="11" rx="3.3" fill="#ef5350"/><path d="M8.6 11 v2.6 M5.2 14.2 h6.8" stroke="#ef5350" stroke-width="1.7"/></g><path d="M0.9 15.3 L15.2 0.8" stroke="#ef5350" stroke-width="1.6"/></svg>Любов Лохвиць<span style="letter-spacing:-1.5px">...</span></div>
<div class="av" style="left:945.5px;top:766.6px;width:90.5px;background:#0b5cab"></div><div class="a" style="left:945.5px;top:767.6px;width:90.5px;height:90px;line-height:90px;text-align:center;font-size:49px;font-weight:400;-webkit-text-stroke:1.1px #fff;color:#fff">И</div>
<div class="lbl nm" style="left:894px;top:842px">Ирина Киселева</div>
<div class="a" style="left:1145px;top:768px;width:90px;height:90px;overflow:hidden;border-radius:9px;"><svg width="90" height="90" viewBox="0 0 90 90"><defs><filter id="f51" x="-10%" y="-10%" width="120%" height="120%"><feGaussianBlur stdDeviation="0.8"/></filter></defs><g filter="url(#f51)"><rect x="-5" y="-5" width="100" height="100" fill="#2a68c8"/><path d="M-5 45 Q30 35 60 50 V95 H-5Z" fill="#f0c828"/>
<path d="M8 8 h30 M6 16 h32 M6 24 h34 M20 32 h16" stroke="#d8d040" stroke-width="3"/>
<ellipse cx="60" cy="58" rx="30" ry="32" fill="#c8884a"/><ellipse cx="58" cy="68" rx="19" ry="23" fill="#e8c0a8"/><path d="M10 95 Q40 80 60 86 Q80 84 95 95Z" fill="#707070"/></g></svg></div>
<div class="lbl" style="left:1094px;top:842px"><svg class="mic" viewBox="0 0 16 16"><g clip-path="url(#micclip)"><rect x="5.3" y="0.3" width="6.6" height="11" rx="3.3" fill="#ef5350"/><path d="M8.6 11 v2.6 M5.2 14.2 h6.8" stroke="#ef5350" stroke-width="1.7"/></g><path d="M0.9 15.3 L15.2 0.8" stroke="#ef5350" stroke-width="1.6"/></svg>Татьяна Мельче<span style="letter-spacing:-1.5px">...</span></div>
<div class="a" style="left:1345px;top:768px;width:90px;height:90px;overflow:hidden;border-radius:9px;"><svg width="90" height="90" viewBox="0 0 90 90"><defs><filter id="f53" x="-10%" y="-10%" width="120%" height="120%"><feGaussianBlur stdDeviation="0.8"/></filter></defs><g filter="url(#f53)"><rect x="-5" y="-5" width="100" height="100" fill="#b0b4b8"/><rect x="74" y="44" width="21" height="51" fill="#e8e8e8"/><rect x="75" y="18" width="9" height="26" fill="#3a2a2a"/><circle cx="84" cy="40" r="5" fill="#c04040"/>
<path d="M18 58 Q14 14 44 10 Q72 12 68 58Z" fill="#7a5a48"/><ellipse cx="47" cy="43" rx="16" ry="20" fill="#e0b8a8"/>
<path d="M12 95 Q20 64 42 62 Q60 66 82 95Z" fill="#1a1818"/></g></svg></div>
<div class="lbl" style="left:1294px;top:842px"><svg class="mic" viewBox="0 0 16 16"><g clip-path="url(#micclip)"><rect x="5.3" y="0.3" width="6.6" height="11" rx="3.3" fill="#ef5350"/><path d="M8.6 11 v2.6 M5.2 14.2 h6.8" stroke="#ef5350" stroke-width="1.7"/></g><path d="M0.9 15.3 L15.2 0.8" stroke="#ef5350" stroke-width="1.6"/></svg>Людмила Калаш<span style="letter-spacing:-1.5px">...</span></div>
<div class="big" style="left:1490px;top:800.6px;line-height:26px;height:26px">Коваленко Ольга</div>
<div class="lbl nm" style="left:1494px;top:842px">Коваленко Ольга</div>
<div class="av" style="left:1745.5px;top:766.6px;width:90.5px;background:#0b5cab"></div><div class="a" style="left:1745.5px;top:767.6px;width:90.5px;height:90px;line-height:90px;text-align:center;font-size:49px;font-weight:400;-webkit-text-stroke:1.1px #fff;color:#fff">I</div>
<div class="lbl" style="left:1694px;top:842px"><svg class="mic" viewBox="0 0 16 16"><g clip-path="url(#micclip)"><rect x="5.3" y="0.3" width="6.6" height="11" rx="3.3" fill="#ef5350"/><path d="M8.6 11 v2.6 M5.2 14.2 h6.8" stroke="#ef5350" stroke-width="1.7"/></g><path d="M0.9 15.3 L15.2 0.8" stroke="#ef5350" stroke-width="1.6"/></svg>Ірина Німенко</div>
<svg class="a" style="left:1889px;top:575px" width="16" height="24" viewBox="0 0 16 24"><path d="M3.5 2.5 L13 12 L3.5 21.5" stroke="#fff" stroke-width="2.5" stroke-linecap="round" stroke-linejoin="round" fill="none"/></svg><!-- TOOLBAR -->
<svg class="a" style="left:48px;top:956px" width="36" height="36" viewBox="0 0 36 36">
<rect x="12.4" y="3.2" width="10.8" height="19" rx="5.4" stroke="#fff" stroke-width="1.6" fill="none"/>
<path d="M8.6 15 v2 q0 9.3 9.2 9.3 q9.2 0 9.2-9.3 v-2" stroke="#fff" stroke-width="1.6" fill="none"/>
<path d="M17.8 26.3 v5.5 M12.4 31.8 h10.8" stroke="#fff" stroke-width="1.6"/>
<path d="M4.2 31.8 L32.2 4" stroke="#000" stroke-width="5"/>
<path d="M4.2 31.8 L32.2 4" stroke="#f0145a" stroke-width="3" stroke-linecap="round"/>
</svg>
<svg class="a" style="left:98px;top:968px" width="14" height="10" viewBox="0 0 14 10"><path d="M3 8 L7 4 L11 8" stroke="#fff" stroke-width="1.7" fill="none"/></svg>
<div class="tl" style="left:-5px;top:996px;font-weight:700;font-size:14px;line-height:16px">Audio</div>
<svg class="a" style="left:164px;top:956px" width="36" height="36" viewBox="0 0 36 36">
<rect x="3.8" y="9.8" width="19.5" height="17.5" rx="3" stroke="#fff" stroke-width="1.7" fill="none"/>
<path d="M23.5 16.5 L32.2 10.3 V27 L23.5 21" stroke="#fff" stroke-width="1.7" fill="none" stroke-linejoin="round"/>
<path d="M4.2 31.8 L32 4.5" stroke="#000" stroke-width="5"/>
<path d="M4.2 31.8 L32 4.5" stroke="#f0145a" stroke-width="3" stroke-linecap="round"/>
</svg>
<svg class="a" style="left:221px;top:968px" width="14" height="10" viewBox="0 0 14 10"><path d="M3 8 L7 4 L11 8" stroke="#fff" stroke-width="1.7" fill="none"/></svg>
<div class="tl" style="left:112px;top:996px;font-weight:700;font-size:14px;line-height:16px">Video</div>

<svg class="a" style="left:634px;top:962px" width="26" height="25" viewBox="0 0 26 25">
<circle cx="7.8" cy="4.2" r="3.3" stroke="#fff" stroke-width="1.7" fill="none"/>
<circle cx="17.5" cy="8.6" r="3.1" stroke="#fff" stroke-width="1.7" fill="none"/>
<path d="M1.5 21.5 v-4.5 q0-5.5 6.3-5.5 q3.5 0 5 1.5" stroke="#fff" stroke-width="1.7" fill="none"/>
<rect x="10" y="15" width="14.5" height="7.5" rx="3.7" stroke="#fff" stroke-width="1.7" fill="none"/>
</svg>
<div class="a" style="left:668.5px;top:962px;font-size:14.6px;letter-spacing:-1px;line-height:16px;color:#fff">122</div>
<svg class="a" style="left:706px;top:967px" width="14" height="10" viewBox="0 0 14 10"><path d="M3 8 L7 4 L11 8" stroke="#fff" stroke-width="1.7" fill="none"/></svg>
<div class="tl" style="left:577px;top:996px;font-weight:700;font-size:14px;line-height:16px">Participants</div>

<svg class="a" style="left:770px;top:960px" width="30" height="29" viewBox="0 0 30 29">
<path d="M7 6 q0-5 5-5 h10 q5 0 5 5 v6 q0 4-3 5" stroke="#fff" stroke-width="1.6" fill="none"/>
<path d="M6 7.5 h9 q5.5 0 5.5 5.5 v4 q0 5.5-5.5 5.5 h-3 l-5 4 v-4 q-6 -0.5-6-5.5 v-4 q0-5.5 5-5.5z" stroke="#fff" stroke-width="1.6" fill="#000" stroke-linejoin="round"/>
<circle cx="7" cy="15.5" r="1.1" fill="#fff"/><circle cx="10.8" cy="15.5" r="1.1" fill="#fff"/><circle cx="14.6" cy="15.5" r="1.1" fill="#fff"/>
</svg>
<svg class="a" style="left:819px;top:967px" width="14" height="10" viewBox="0 0 14 10"><path d="M3 8 L7 4 L11 8" stroke="#fff" stroke-width="1.7" fill="none"/></svg>
<div class="tl" style="left:715px;top:996px;font-weight:700;font-size:14px;line-height:16px">Chat</div>

<svg class="a" style="left:876px;top:960px" width="32" height="28" viewBox="0 0 32 28">
<path d="M9.5 26 L3.5 16 q-3.5-6 0-11 q4-5 9.5-2 l2.5 2 l2.5-2 q6-3.5 10.5 1 q4 5 0 10z" stroke="#fff" stroke-width="1.6" fill="none" stroke-linejoin="round" transform="rotate(-8 16 14)"/>
</svg>
<svg class="a" style="left:919px;top:967px" width="14" height="10" viewBox="0 0 14 10"><path d="M3 8 L7 4 L11 8" stroke="#fff" stroke-width="1.7" fill="none"/></svg>
<div class="tl" style="left:822px;top:996px;font-weight:700;font-size:14px;line-height:16px">React</div>

<div class="a" style="left:988px;top:962px;width:30px;height:24px;border-radius:4px;background:#12e88a"></div>
<svg class="a" style="left:994px;top:964px" width="18" height="20" viewBox="0 0 18 20"><path d="M9 16.5 V5 M3.8 10 L9 4.5 L14.2 10" stroke="#000" stroke-width="2.6" fill="none" stroke-linejoin="miter"/></svg>
<div class="tl" style="left:933px;top:996px;font-weight:700;font-size:14px;line-height:16px">Share</div>

<svg class="a" style="left:1106px;top:959px" width="34" height="30" viewBox="0 0 34 30">
<defs><linearGradient id="spk" x1="0" y1="0" x2="1" y2="1"><stop offset="0" stop-color="#f2fbff"/><stop offset="0.5" stop-color="#a8d8e8"/><stop offset="1" stop-color="#6aaac8"/></linearGradient></defs>
<path d="M16 2 Q17.5 13 29.5 15.5 Q17.5 18 16 29 Q14.5 18 2.5 15.5 Q14.5 13 16 2Z" fill="url(#spk)"/>
<path d="M27 0.3 Q27.8 4.2 32 5 Q27.8 5.8 27 9.7 Q26.2 5.8 22 5 Q26.2 4.2 27 0.3Z" fill="#cdeaf2"/>
</svg>
<div class="tl" style="left:1053px;top:996px;font-weight:700;font-size:14px;line-height:16px">AI Companion</div>

<svg class="a" style="left:1218px;top:960px" width="28" height="28" viewBox="0 0 28 28">
<path d="M1.5 11 V6.5 q0-5 5-5 H11" stroke="#fff" stroke-width="1.7" fill="none"/>
<circle cx="21" cy="6.5" r="4.7" stroke="#fff" stroke-width="1.7" fill="none"/>
<circle cx="6.5" cy="21" r="4.7" stroke="#fff" stroke-width="1.7" fill="none"/>
<path d="M26.5 17 V21.5 q0 5-5 5 H17" stroke="#fff" stroke-width="1.7" fill="none"/>
</svg>
<div class="tl" style="left:1162px;top:996px;font-weight:700;font-size:14px;line-height:16px">Apps</div>

<svg class="a" style="left:1317px;top:959px" width="30" height="30" viewBox="0 0 30 30"><circle cx="15" cy="15" r="13" stroke="#fff" stroke-width="1.8" fill="none"/><circle cx="15" cy="15" r="5.6" fill="#fff"/></svg>
<div class="tl" style="left:1262px;top:996px;font-weight:700;font-size:14px;line-height:16px">Record</div>

<svg class="a" style="left:1418px;top:958px" width="32" height="32" viewBox="0 0 32 32"><circle cx="16" cy="16" r="14" stroke="#fff" stroke-width="1.8" fill="none"/><circle cx="8.4" cy="16" r="1.8" fill="#fff"/><circle cx="16" cy="16" r="1.8" fill="#fff"/><circle cx="23.6" cy="16" r="1.8" fill="#fff"/></svg>
<div class="tl" style="left:1363px;top:996px;font-weight:700;font-size:14px;line-height:16px">More</div>

<svg class="a" style="left:1843px;top:958px" width="34" height="32" viewBox="0 0 34 32">
<path d="M12.5 2 H30.5 V24.5 L22 29.5 V8 L30.5 2.5" stroke="#f0145a" stroke-width="1.7" fill="none" stroke-linejoin="round"/>
<circle cx="9.5" cy="8" r="3.6" stroke="#fff" stroke-width="1.7" fill="none"/>
<path d="M6.5 13.5 Q4 15 3 19 L5 20 L7.5 16.5 L8 22 L4 28.5 q1.5 2 3 0.5 L10.5 23 L12.5 29 q1.8 0.5 2.5-1 L12 20 L12.5 16.5 L14.5 19.5 L17 18.5 Q14 13 11.5 12.5Z" stroke="#fff" stroke-width="1.6" fill="none" stroke-linejoin="round"/>
</svg>
<div class="tl" style="left:1788px;top:996px;font-weight:700;font-size:14px;line-height:16px">Leave</div>
<!-- TASKBAR -->
<svg class="a" style="left:24px;top:1038px" width="33" height="22" viewBox="0 0 33 22">
<defs><linearGradient id="cld" x1="0" y1="0" x2="0" y2="1"><stop offset="0" stop-color="#b8d0f4"/><stop offset="0.7" stop-color="#c4d8f2"/><stop offset="1" stop-color="#7aa0e0"/></linearGradient></defs>
<path d="M6.5 20.5 Q1 20.5 1 15.5 Q1 10.5 6.5 10 Q8 3 15 2 Q21 2 23 7 Q26 5.5 29 8 Q32 11 31 15.5 Q30.5 20.5 25 20.5Z" fill="url(#cld)"/>
<path d="M6 11 Q11 9.5 14 12.5" stroke="#9ab8e8" stroke-width="1" fill="none" opacity="0.6"/>
</svg>
<div class="a" style="left:65px;top:1032px;font-size:14.2px;line-height:16px;color:#1a1a1a">7°C</div>
<div class="a" style="left:65px;top:1051px;font-size:14.2px;line-height:16px;color:#5c5c5c">Cloudy</div>

<svg class="a" style="left:410px;top:1036px" width="29" height="29" viewBox="0 0 29 29">
<defs><linearGradient id="win" x1="0" y1="0" x2="1" y2="1"><stop offset="0" stop-color="#4cc8f8"/><stop offset="0.5" stop-color="#1a90e0"/><stop offset="1" stop-color="#0068c8"/></linearGradient></defs>
<rect x="0" y="0" width="13.7" height="13.7" rx="1" fill="url(#win)"/><rect x="15.1" y="0" width="13.7" height="13.7" rx="1" fill="url(#win)"/>
<rect x="0" y="15.1" width="13.7" height="13.7" rx="1" fill="url(#win)"/><rect x="15.1" y="15.1" width="13.7" height="13.7" rx="1" fill="url(#win)"/>
</svg>
<div class="a" style="left:457px;top:1031px;width:273px;height:38px;border-radius:19px;background:linear-gradient(90deg,#f6f8fd,#eef2fa);border:1px solid #c6cdd9;box-shadow:0 1px 0 rgba(0,0,0,0.06)"></div>
<svg class="a" style="left:470px;top:1040px" width="20" height="20" viewBox="0 0 20 20"><circle cx="8" cy="8" r="6.2" stroke="#1e1e1e" stroke-width="1.9" fill="#eceef2"/><path d="M12.6 12.6 L18 18" stroke="#1e1e1e" stroke-width="2.2" stroke-linecap="round"/></svg>
<div class="a" style="left:502px;top:1040px;font-size:17.6px;line-height:20px;color:#444">Пошук</div>
<svg class="a" style="left:662px;top:1033px" width="65" height="34" viewBox="0 0 65 34">
<defs><linearGradient id="sky" x1="0" y1="0" x2="1" y2="0"><stop offset="0" stop-color="#ffd8a8"/><stop offset="0.5" stop-color="#f0c8e0"/><stop offset="1" stop-color="#a8e0f0"/></linearGradient>
<linearGradient id="hill" x1="0" y1="0" x2="0" y2="1"><stop offset="0" stop-color="#6a9a50"/><stop offset="1" stop-color="#a8b860"/></linearGradient></defs>
<path d="M4 14 Q8 4 20 6 Q30 0 42 4 Q56 2 62 12 L62 18 H4Z" fill="url(#sky)"/>
<ellipse cx="33" cy="22" rx="31" ry="11" fill="url(#hill)"/>
<path d="M2 20 Q8 12 16 14 L20 24Z M63 20 Q58 12 50 14 L46 24Z" fill="#3a7a50"/>
<ellipse cx="34" cy="19" rx="15" ry="8" fill="#8a8070"/>
<ellipse cx="34" cy="15.5" rx="14" ry="5" fill="#5a5a50"/>
<ellipse cx="34" cy="16" rx="9" ry="3" fill="#8aa060"/>
</svg>
<svg class="a" style="left:745px;top:1035px" width="32" height="30" viewBox="0 0 32 30">
<defs><linearGradient id="tv1" x1="0" y1="0" x2="0" y2="1"><stop offset="0" stop-color="#3a3a3a"/><stop offset="1" stop-color="#101010"/></linearGradient></defs>
<rect x="1.2" y="8.7" width="22.3" height="20" rx="2" fill="url(#tv1)"/>
<rect x="8.5" y="1" width="22.1" height="19.6" rx="1.5" fill="#f4f4f4" opacity="0.92"/>
<rect x="8.5" y="8.7" width="15" height="11.9" fill="#b8b8b8"/>
</svg>

<!-- pinned apps -->
<svg class="a" style="left:856px;top:1035px" width="30" height="31" viewBox="0 0 30 31">
<defs><linearGradient id="st" x1="0" y1="0" x2="0" y2="1"><stop offset="0" stop-color="#1e62b8"/><stop offset="1" stop-color="#153a78"/></linearGradient></defs>
<path d="M8 6 V3 q0-2 2-2 h9.5 q2 0 2 2 v3" stroke="#38b8f0" stroke-width="1.8" fill="none"/>
<rect x="0.5" y="5" width="28.5" height="25" rx="4" fill="url(#st)"/>
<rect x="9.2" y="11.5" width="5" height="5" fill="#f25022"/><rect x="15.2" y="11.5" width="5" height="5" fill="#7fba00"/>
<rect x="9.2" y="17.5" width="5" height="5" fill="#00a4ef"/><rect x="15.2" y="17.5" width="5" height="5" fill="#ffb900"/>
</svg>
<svg class="a" style="left:911px;top:1035px" width="30" height="30" viewBox="0 0 30 30">
<defs><radialGradient id="ff" cx="0.5" cy="0.75" r="0.7"><stop offset="0" stop-color="#ff3a5a"/><stop offset="0.6" stop-color="#ff7a20"/><stop offset="1" stop-color="#ffc830"/></radialGradient>
<radialGradient id="ffp" cx="0.4" cy="0.4" r="0.6"><stop offset="0" stop-color="#a060f0"/><stop offset="1" stop-color="#6a38c8"/></radialGradient></defs>
<path d="M15 29 Q2 29 1 16 Q1 8 6 4 Q5 8 8 9 Q11 4 17 2 Q16 5 18 6 Q21 1 23 0.5 Q22 4 25 7 Q29 11 29 17 Q28 29 15 29Z" fill="url(#ff)"/>
<circle cx="15" cy="15.5" r="7" fill="url(#ffp)"/>
<path d="M9 12 Q12 7 18 9 Q14 10 13 13Z" fill="#ff9a30"/>
</svg>
<div class="a" style="left:966px;top:1035px;width:29px;height:30px;border-radius:4px;background:#1f3b78"></div>
<div class="a" style="left:971px;top:1038px;font-size:21px;line-height:24px;font-weight:700;color:#fff">B</div>
<div class="a" style="left:986px;top:1053px;width:4px;height:4px;border-radius:50%;background:#2aa0e8"></div>
<svg class="a" style="left:1020px;top:1035px" width="32" height="29" viewBox="0 0 32 29">
<defs><linearGradient id="ol" x1="0" y1="0" x2="1" y2="1"><stop offset="0" stop-color="#38b8f0"/><stop offset="1" stop-color="#1060c0"/></linearGradient></defs>
<path d="M9 8 L20 1 L30.5 7 V26 q0 2-2 2 H11 q-2 0-2-2z" fill="url(#ol)"/>
<path d="M9 8 L20 1 L30.5 7 L20 14Z" fill="#1888d8"/>
<path d="M11 28 L30.5 14 V26 q0 2-2 2Z" fill="#50c8f8"/>
<rect x="0.5" y="6.5" width="15" height="15" rx="1.5" fill="#0a64c8"/>
<ellipse cx="8" cy="14" rx="4.2" ry="4.8" stroke="#fff" stroke-width="2.2" fill="none"/>
</svg>
<svg class="a" style="left:1075px;top:1035px" width="31" height="30" viewBox="0 0 31 30">
<defs><linearGradient id="ed1" x1="0" y1="0" x2="1" y2="1"><stop offset="0" stop-color="#30a8e0"/><stop offset="0.6" stop-color="#40c890"/><stop offset="1" stop-color="#60d860"/></linearGradient>
<linearGradient id="ed2" x1="0" y1="0" x2="0" y2="1"><stop offset="0" stop-color="#1060b0"/><stop offset="1" stop-color="#2a80d0"/></linearGradient></defs>
<path d="M15.5 1 Q27 1 30 11 Q31 19 24 20 Q18 20 17.5 16 Q17 12 21 13 Q19 9 14 9 Q6 10 4 18 Q3 12 5 8 Q9 1 15.5 1Z" fill="url(#ed1)"/>
<path d="M4 18 Q3 26 12 29 Q20 31 27 25 Q19 28 14 23 Q10 18 14 14 Q8 13 4 18Z" fill="url(#ed2)"/>
<path d="M1 14 Q1 7 6 4 Q3 10 4 18 Q6 26 12 29 Q1 26 1 14Z" fill="#1e88d8"/>
</svg>
<div class="a" style="left:1122px;top:1026px;width:43px;height:48px;border-radius:5px;background:#eef1f9;box-shadow:3px 0 0 -1px #e6eaf4,4px 0 0 -1px #d8dde8"></div>
<div class="a" style="left:1131px;top:1035px;width:30px;height:30px;border-radius:45%;background:radial-gradient(circle at 40% 35%,#2a7aff,#0b5cff 70%)"></div>
<div class="a" style="left:1131px;top:1043px;width:30px;text-align:center;font-size:8.5px;line-height:12px;color:#fff;letter-spacing:-0.2px">zoom</div>
<div class="a" style="left:1136px;top:1070px;width:20px;height:3.5px;border-radius:2px;background:#5a6270"></div>
<svg class="a" style="left:1186px;top:1037px" width="30" height="27" viewBox="0 0 30 27">
<path d="M0 3 q0-3 3-3 h7 l3 3 h14 q3 0 3 3 v18 q0 3-3 3 H3 q-3 0-3-3z" fill="#e8a800"/>
<rect x="0" y="6" width="30" height="21" rx="2" fill="#ffc830"/>
<rect x="5" y="18.5" width="20" height="8.5" rx="2" fill="#1a80d8"/>
<path d="M8 21.5 h14" stroke="#0a4a98" stroke-width="1.2"/>
</svg>
<div class="a" style="left:1197px;top:1071px;width:8px;height:3px;border-radius:2px;background:#7a8290"></div>
<div class="a" style="left:1243px;top:1037px;width:26px;height:26px;background:#0a1896"></div>
<div class="a" style="left:1246px;top:1040px;width:20px;height:20px;background:#fff"></div>
<div class="a" style="left:1243px;top:1040px;width:26px;text-align:center;font-style:italic;font-weight:700;font-size:19px;line-height:21px;color:#0a1896;letter-spacing:-1px;-webkit-text-stroke:0.7px #0a1896">W</div>
<div class="a" style="left:1252px;top:1071px;width:8px;height:3px;border-radius:2px;background:#7a8290"></div>
<div class="a" style="left:1298px;top:1037px;width:26px;height:26px;background:#0a780a"></div>
<div class="a" style="left:1301px;top:1040px;width:20px;height:20px;background:#fff"></div>
<div class="a" style="left:1298px;top:1040px;width:26px;text-align:center;font-weight:700;font-size:20px;line-height:21px;color:#0a780a;-webkit-text-stroke:0.8px #0a780a">X</div>
<div class="a" style="left:1307px;top:1071px;width:8px;height:3px;border-radius:2px;background:#7a8290"></div>
<svg class="a" style="left:1351px;top:1035px" width="30" height="30" viewBox="0 0 30 30">
<path d="M15 15 L28 8 A15 15 0 0 0 2.5 7.5Z" fill="#e33b2e"/>
<path d="M15 15 L2.5 7.5 A15 15 0 0 0 13 29.8Z" fill="#2aa24a"/>
<path d="M15 15 L13 29.8 A15 15 0 0 0 28 8Z" fill="#fbc02d"/>
<circle cx="15" cy="15" r="6.8" fill="#fff"/><circle cx="15" cy="15" r="5.3" fill="#1a73e8"/>
</svg>
<div class="a" style="left:1366px;top:1029px;width:21px;height:20px;border-radius:50%;background:#5b6bc8"></div>
<div class="a" style="left:1375.5px;top:1034px;width:2px;height:9px;background:#fff"></div>
<div class="a" style="left:1362px;top:1071px;width:8px;height:3px;border-radius:2px;background:#7a8290"></div>

<!-- tray -->
<svg class="a" style="left:1476px;top:1044px" width="16" height="12" viewBox="0 0 16 12"><path d="M2 9.5 L8 3.5 L14 9.5" stroke="#1a1a1a" stroke-width="1.5" fill="none"/></svg>
<svg class="a" style="left:1513px;top:1041px" width="23" height="16" viewBox="0 0 23 16">
<defs><linearGradient id="od" x1="0" y1="0" x2="0" y2="1"><stop offset="0" stop-color="#f0f0f0"/><stop offset="1" stop-color="#909090"/></linearGradient></defs>
<path d="M5 15 Q0.5 15 0.8 11 Q1 7.5 4.5 7.5 Q6 2 11.5 2 Q16 2 17.5 6 Q22 6 22 10.5 Q22 15 17.5 15Z" fill="url(#od)" stroke="#5a5a5a" stroke-width="1"/>
</svg>
<svg class="a" style="left:1553px;top:1039px" width="23" height="23" viewBox="0 0 23 23">
<path d="M3.5 10 Q4 3 11 2.5 Q16 2.5 18.5 6.5 M19 2.5 V7 H14.5" stroke="#1a1a1a" stroke-width="1.4" fill="none"/>
<path d="M18.5 12 Q18 19 11 19.5 Q6 19.5 3.5 15.5 M3 20 V15 H7.5" stroke="#1a1a1a" stroke-width="1.4" fill="none"/>
<circle cx="16.5" cy="15.5" r="4.6" fill="#f5a020"/>
</svg>
<svg class="a" style="left:1596px;top:1040px" width="16" height="21" viewBox="0 0 16 21"><rect x="4.5" y="1" width="7" height="12" rx="3.5" stroke="#333" stroke-width="1.5" fill="none"/><path d="M1.5 9.5 q0 6 6.5 6 q6.5 0 6.5-6 M8 15.5 v4.5" stroke="#333" stroke-width="1.5" fill="none"/></svg>
<div class="a" style="left:1640px;top:1034px;font-size:13.8px;line-height:16px;color:#1a1a1a;letter-spacing:-0.3px">УКР</div>
<div class="a" style="left:1635px;top:1054px;font-size:13.8px;line-height:16px;color:#1a1a1a;letter-spacing:-0.8px">UKRE</div>
<svg class="a" style="left:1688px;top:1041px" width="22" height="17" viewBox="0 0 22 17"><path d="M1.5 6 Q11 -2.5 20.5 6 M4.5 9 Q11 3.5 17.5 9 M7.5 12 Q11 9 14.5 12" stroke="#1a1a1a" stroke-width="1.5" fill="none"/><circle cx="11" cy="14.6" r="1.6" fill="#1a1a1a"/></svg>
<svg class="a" style="left:1718px;top:1040px" width="22" height="19" viewBox="0 0 22 19"><path d="M1.5 6.5 h3.5 l5-4.5 v15 l-5-4.5 h-3.5z" stroke="#1a1a1a" stroke-width="1.4" fill="none" stroke-linejoin="round"/><path d="M13 6.5 q2 3 0 6 M15.5 4.5 q3.5 5 0 10 M18 2.5 q5 7 0 14" stroke="#1a1a1a" stroke-width="1.4" fill="none"/></svg>
<svg class="a" style="left:1749px;top:1041px" width="26" height="16" viewBox="0 0 26 16"><rect x="1" y="2" width="21.5" height="12" rx="2" stroke="#1a1a1a" stroke-width="1.4" fill="#2a9a2a"/><rect x="23" y="5.5" width="2" height="5" fill="#1a1a1a"/><path d="M13 0.5 L9.5 8.5 H12.5 L11 13 L15 6 H12Z" fill="#1a1a1a" stroke="#e8f0f8" stroke-width="0.6"/></svg>
<div class="a" style="left:1830px;top:1033px;font-size:13.8px;line-height:16px;color:#1a1a1a">16:35</div>
<div class="a" style="left:1796px;top:1053px;font-size:13.8px;line-height:16px;color:#1a1a1a;letter-spacing:-0.15px">17.03.2026</div>
<svg class="a" style="left:1876px;top:1040px" width="20" height="21" viewBox="0 0 20 21"><path d="M2 15.5 q2.5-1.5 2.5-5 q0-6 5.5-6.5 q2 0 3 1 M2 15.5 h14 q-2-1.5-2.5-4" stroke="#1a1a1a" stroke-width="1.5" fill="#1a1a1a"/><path d="M7.5 18 q2.5 2.5 5 0" stroke="#1a1a1a" stroke-width="1.5" fill="none"/><text x="11" y="8.5" font-family="Liberation Sans" font-size="8" font-weight="700" fill="#1a1a1a">z</text><text x="14.5" y="5" font-family="Liberation Sans" font-size="7" font-weight="700" fill="#1a1a1a">z</text></svg>

</body></html>
